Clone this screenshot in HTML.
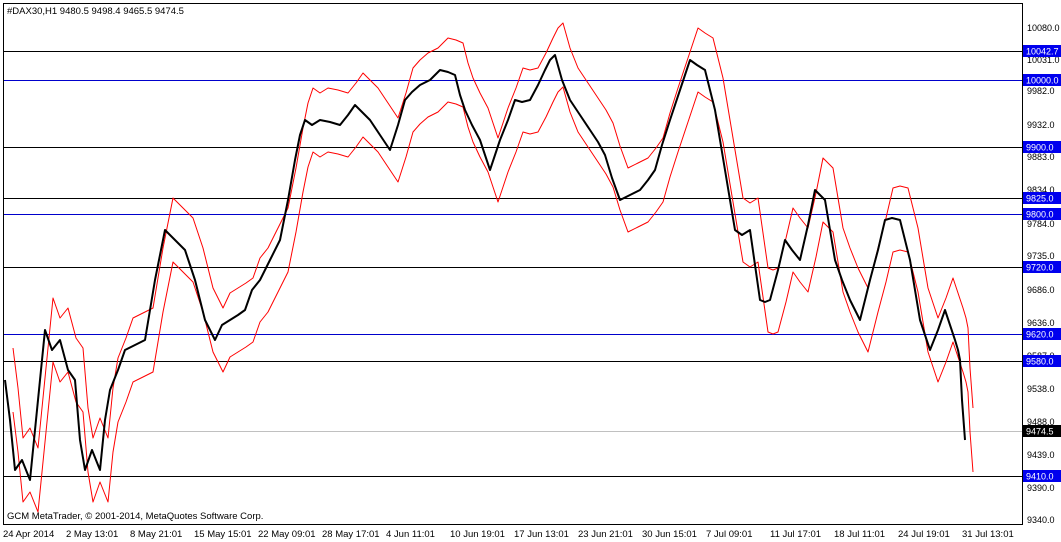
<!DOCTYPE html>
<html><head><meta charset="utf-8"><style>
html,body{margin:0;padding:0;background:#fff;}
svg{display:block;font-family:"Liberation Sans",sans-serif;font-size:9.5px;}
</style></head><body>
<svg width="1061" height="542" viewBox="0 0 1061 542" xmlns="http://www.w3.org/2000/svg">
<rect x="0" y="0" width="1061" height="542" fill="#fff"/>
<rect x="3.5" y="3.5" width="1019" height="521" fill="none" stroke="#000"/>
<g stroke-width="1" shape-rendering="crispEdges">
<line x1="4" y1="51.5" x2="1022" y2="51.5" stroke="#000"/>
<line x1="4" y1="80.5" x2="1022" y2="80.5" stroke="#0000cc"/>
<line x1="4" y1="147.5" x2="1022" y2="147.5" stroke="#000"/>
<line x1="4" y1="198.5" x2="1022" y2="198.5" stroke="#000"/>
<line x1="4" y1="214.5" x2="1022" y2="214.5" stroke="#0000cc"/>
<line x1="4" y1="267.5" x2="1022" y2="267.5" stroke="#000"/>
<line x1="4" y1="334.5" x2="1022" y2="334.5" stroke="#0000cc"/>
<line x1="4" y1="361.5" x2="1022" y2="361.5" stroke="#000"/>
<line x1="4" y1="431.5" x2="1022" y2="431.5" stroke="#c0c0c0"/>
<line x1="4" y1="476.5" x2="1022" y2="476.5" stroke="#000"/>
</g>
<defs>
<polyline id="p" fill="none" stroke-linejoin="round" points="5,380 10,420 15,470 22,460 30,480 38,400 45,330 52,350 60,340 68,370 75,380 80,440 85,470 92,450 100,470 105,420 110,390 118,370 125,350 135,345 145,340 155,280 165,230 175,240 185,250 190,265 195,280 200,300 205,320 210,330 215,340 222,325 230,320 238,315 245,310 252,290 260,280 270,260 280,240 288,200 295,160 300,135 305,120 312,125 320,120 330,122 340,125 348,115 355,105 362,112 370,120 380,135 390,150 398,125 405,100 412,92 420,85 430,80 440,70 448,72 455,75 460,95 465,110 472,125 480,140 485,155 490,170 495,155 500,140 508,120 515,100 522,102 530,100 538,85 545,70 550,60 555,55 562,80 570,100 580,115 590,130 598,142 605,155 612,178 620,200 630,195 640,190 648,180 655,170 662,145 670,120 680,90 690,60 697,65 705,70 710,90 715,110 720,140 725,170 730,200 735,230 742,235 750,230 755,265 760,300 765,302 770,300 778,270 785,240 792,250 800,260 808,225 815,190 820,195 825,200 830,230 835,260 842,280 850,300 855,310 860,320 865,300 870,280 878,250 885,220 892,218 900,220 905,240 910,260 915,290 920,320 925,335 930,350 938,330 945,310 950,325 955,340 958,350 960,360 962,400 965,440"/>
</defs>
<use href="#p" stroke="#ff0000" stroke-width="1" transform="translate(8,-32)"/>
<use href="#p" stroke="#ff0000" stroke-width="1" transform="translate(8,32)"/>
<use href="#p" stroke="#000" stroke-width="2"/>
<text x="7" y="14" fill="#000">#DAX30,H1  9480.5 9498.4 9465.5 9474.5</text>
<text x="7" y="519" fill="#000">GCM MetaTrader, © 2001-2014, MetaQuotes Software Corp.</text>
<g fill="#000" font-size="9px">
<text x="1027" y="31">10080.0</text><text x="1027" y="63">10031.0</text><text x="1027" y="94">9982.0</text>
<text x="1027" y="128">9932.0</text><text x="1027" y="160">9883.0</text><text x="1027" y="193">9834.0</text>
<text x="1027" y="227">9784.0</text><text x="1027" y="259">9735.0</text><text x="1027" y="293">9686.0</text>
<text x="1027" y="326">9636.0</text><text x="1027" y="359">9587.0</text><text x="1027" y="392">9538.0</text>
<text x="1027" y="425">9488.0</text><text x="1027" y="458">9439.0</text><text x="1027" y="491">9390.0</text>
<text x="1027" y="523">9340.0</text>
</g>
<g font-size="9px">
<rect x="1023" y="45" width="38" height="12" fill="#0000ee"/><text x="1026" y="54.5" fill="#fff">10042.7</text>
<rect x="1023" y="74" width="38" height="12" fill="#0000ee"/><text x="1026" y="83.5" fill="#fff">10000.0</text>
<rect x="1023" y="141" width="38" height="12" fill="#0000ee"/><text x="1026" y="150.5" fill="#fff">9900.0</text>
<rect x="1023" y="192" width="38" height="12" fill="#0000ee"/><text x="1026" y="201.5" fill="#fff">9825.0</text>
<rect x="1023" y="208" width="38" height="12" fill="#0000ee"/><text x="1026" y="217.5" fill="#fff">9800.0</text>
<rect x="1023" y="261" width="38" height="12" fill="#0000ee"/><text x="1026" y="270.5" fill="#fff">9720.0</text>
<rect x="1023" y="328" width="38" height="12" fill="#0000ee"/><text x="1026" y="337.5" fill="#fff">9620.0</text>
<rect x="1023" y="355" width="38" height="12" fill="#0000ee"/><text x="1026" y="364.5" fill="#fff">9580.0</text>
<rect x="1023" y="425" width="38" height="12" fill="#000"/><text x="1026" y="434.5" fill="#fff">9474.5</text>
<rect x="1023" y="470" width="38" height="12" fill="#0000ee"/><text x="1026" y="479.5" fill="#fff">9410.0</text>
</g>
<g fill="#000">
<text x="3" y="537">24 Apr 2014</text><text x="66" y="537">2 May 13:01</text><text x="130" y="537">8 May 21:01</text>
<text x="194" y="537">15 May 15:01</text><text x="258" y="537">22 May 09:01</text><text x="322" y="537">28 May 17:01</text>
<text x="386" y="537">4 Jun 11:01</text><text x="450" y="537">10 Jun 19:01</text><text x="514" y="537">17 Jun 13:01</text>
<text x="578" y="537">23 Jun 21:01</text><text x="642" y="537">30 Jun 15:01</text><text x="706" y="537">7 Jul 09:01</text>
<text x="770" y="537">11 Jul 17:01</text><text x="834" y="537">18 Jul 11:01</text><text x="898" y="537">24 Jul 19:01</text>
<text x="962" y="537">31 Jul 13:01</text>
</g>
</svg>
</body></html>
